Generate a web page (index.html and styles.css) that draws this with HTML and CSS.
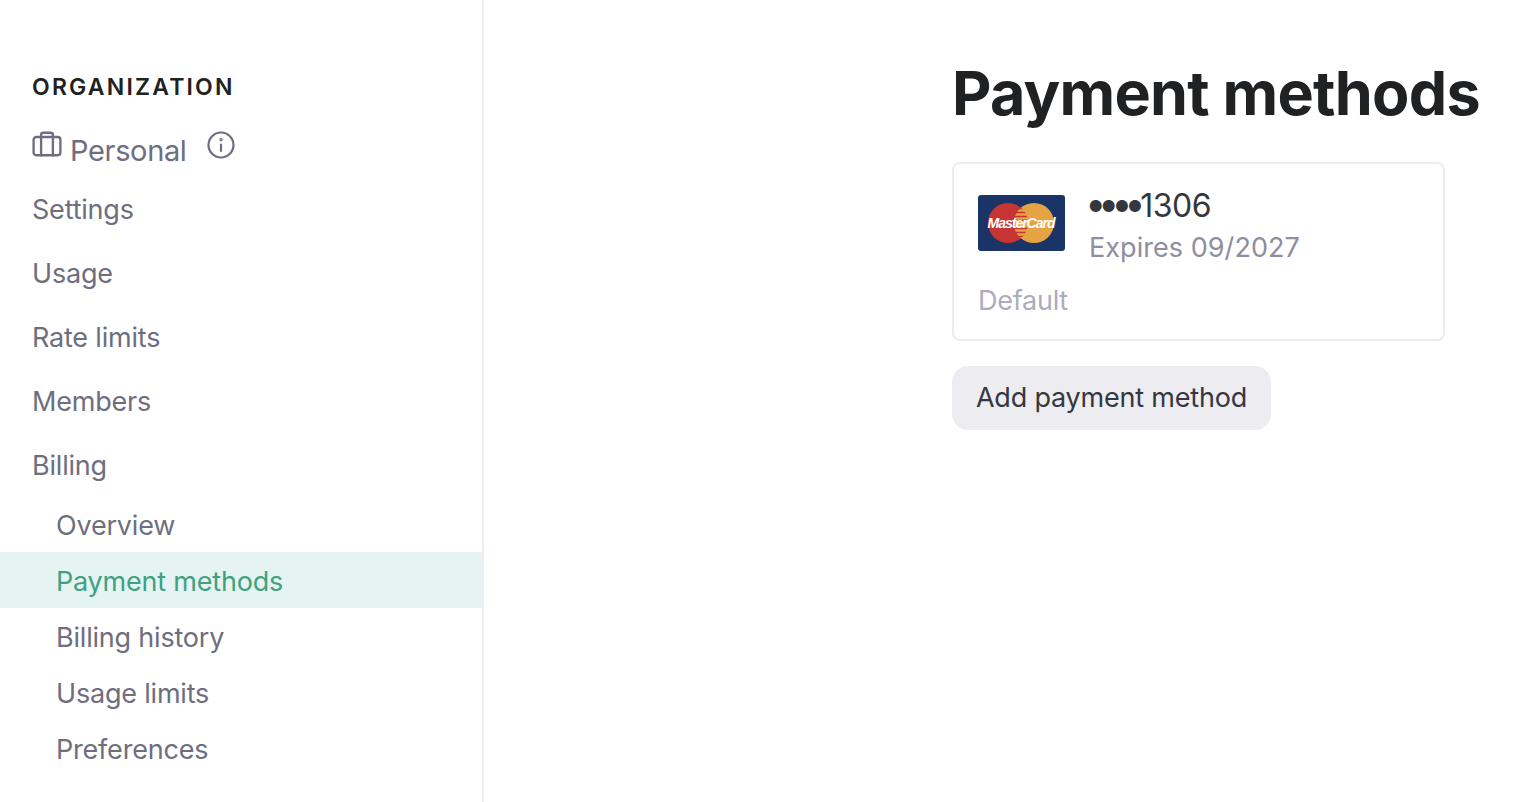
FILE: index.html
```html
<!DOCTYPE html>
<html lang="en">
<head>
<meta charset="utf-8">
<title>Payment methods</title>
<link rel="stylesheet" href="styles.css">
</head>
<body>
<div class="app">
  <aside class="sidebar">
    <div class="org-heading">ORGANIZATION</div>
    <div class="org-row">
      <svg class="org-icon" viewBox="0 0 28 24" fill="none" stroke="#6e6e80" stroke-width="2.200" stroke-linejoin="round" stroke-linecap="round"><rect x="1.500" y="5.500" width="25" height="17" rx="2.500"/><path d="M8.500 22.500V3.500a2 2 0 0 1 2-2h7a2 2 0 0 1 2 2v19"/></svg>
      <span class="org-name">Personal</span>
      <svg class="info-icon" viewBox="0 0 28 28" fill="none" stroke="#6e6e80" stroke-width="2.200" stroke-linecap="round"><circle cx="14" cy="14" r="12.500"/><path d="M14 13.500v6.500"/><circle cx="14" cy="8.800" r="0.600"/></svg>
    </div>
    <nav class="nav">
      <a class="nav-item">Settings</a>
      <a class="nav-item">Usage</a>
      <a class="nav-item">Rate limits</a>
      <a class="nav-item">Members</a>
      <a class="nav-item">Billing</a>
    </nav>
    <nav class="subnav">
      <a class="sub-item">Overview</a>
      <a class="sub-item active">Payment methods</a>
      <a class="sub-item">Billing history</a>
      <a class="sub-item">Usage limits</a>
      <a class="sub-item">Preferences</a>
    </nav>
  </aside>
  <main class="main">
    <h1 class="title">Payment methods</h1>
    <section class="card">
      <div class="card-top">
        <svg class="logo" viewBox="0 0 87 56">
          <defs>
            <clipPath id="overlap"><circle cx="30" cy="28" r="20"/></clipPath>
          </defs>
          <rect width="87" height="56" rx="3" fill="#1b3468"/>
          <circle cx="30" cy="28" r="20" fill="#c63533"/>
          <circle cx="56" cy="28" r="20" fill="#e5a343"/>
          <g clip-path="url(#overlap)">
            <circle cx="56" cy="28" r="20" fill="#e5a343"/>
            <path d="M34 13.500h20M34 17.500h20M34 21.500h20M34 25.500h20M34 33.500h20M34 37.500h20M34 41.500h20" stroke="#c63533" stroke-width="1.600"/>
          </g>
          <text class="logo-text" x="43" y="33">MasterCard</text>
        </svg>
        <div class="card-info">
          <div class="card-number"><span class="dots">••••</span>1306</div>
          <div class="card-exp">Expires 09/2027</div>
        </div>
      </div>
      <div class="card-default">Default</div>
    </section>
    <button class="add-btn" type="button">Add payment method</button>
  </main>
</div>
</body>
</html>
```
FILE: styles.css
```css
* { box-sizing: border-box; }
html, body { margin: 0; height: 100%; background: #fff; overflow: hidden; }
body { font-family: Inter, "Liberation Sans", sans-serif; color: #202123; }
.app { display: flex; height: 802px; }
.sidebar { width: 484px; flex: none; border-right: 2px solid #ececf1; padding-top: 72px; }
.org-heading { margin-left: 32px; font-size: 23px; line-height: 30px; font-weight: 600; letter-spacing: 2.200px; color: #202123; }
.org-row { display: flex; align-items: center; margin: 25px 0 0 32px; height: 48px; color: #6e6e80; }
.org-icon { width: 30px; height: 26px; margin-top: -14px; }
.org-name { font-size: 29px; line-height: 40px; margin-left: 8px; letter-spacing: -0.350px; }
.info-icon { width: 28px; height: 28px; margin: -13px 0 0 20px; }
.nav { display: flex; flex-direction: column; margin-top: 3px; }
.nav-item { height: 64px; line-height: 64px; padding-left: 32px; font-size: 27px; color: #6e6e80; letter-spacing: -0.200px; }
.subnav { display: flex; flex-direction: column; margin-top: -2px; }
.sub-item { height: 56px; line-height: 60px; padding-left: 56px; font-size: 27px; color: #6e6e80; letter-spacing: -0.200px; }
.sub-item.active { background: #e6f3f3; color: #3fa27f; }
.main { flex: 1; min-width: 0; padding: 51px 0 0 468px; }
.title { margin: 0; font-size: 61px; line-height: 84px; font-weight: 700; color: #202123; white-space: nowrap; letter-spacing: -0.750px; }
.card { width: 493px; height: 179px; margin-top: 27px; padding: 31px 24px 0; border: 2px solid #ececf1; border-radius: 8px; background: #fff; }
.card-top { display: flex; gap: 25px; align-items: flex-start; }
.logo { width: 87px; height: 56px; flex: none; }
.logo-text { font-family: "Liberation Sans", sans-serif; font-size: 14px; font-weight: 700; font-style: italic; fill: #fff; text-anchor: middle; letter-spacing: -1px; }
.card-info { margin-top: -10px; }
.card-number { font-size: 32px; line-height: 42px; color: #353740; letter-spacing: -0.500px; }
.dots { font-size: 38px; line-height: 0; letter-spacing: -8.300px; margin: 0 3px 0 -5px; }
.card-exp { font-size: 27px; line-height: 42px; margin-left: -1px; color: #8e8ea0; letter-spacing: 0.050px; }
.card-default { margin-top: 12px; font-size: 27px; line-height: 40px; color: #acacbe; letter-spacing: -0.250px; }
.add-btn { display: block; width: 319px; height: 64px; margin-top: 25px; padding: 0 0 2px; border: 0; border-radius: 16px; background: #ececf1; font-family: inherit; font-size: 27px; color: #353740; letter-spacing: -0.200px; }
```
